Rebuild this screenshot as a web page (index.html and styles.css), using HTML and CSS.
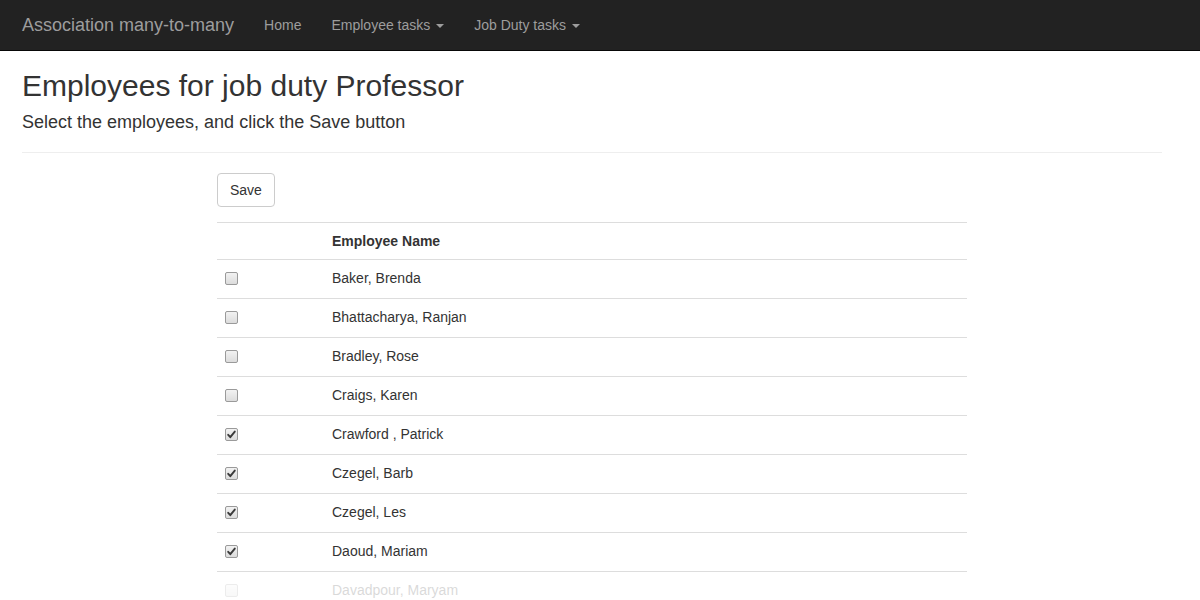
FILE: index.html
```html
<!DOCTYPE html>
<html>
<head>
<meta charset="utf-8">
<title>Employees for job duty Professor</title>
<link rel="stylesheet" href="styles.css">
</head>
<body>
<nav class="navbar">
  <a class="brand" href="#">Association many-to-many</a>
  <ul class="nav">
    <li><a href="#">Home</a></li>
    <li><a href="#">Employee tasks <span class="caret"></span></a></li>
    <li><a href="#">Job Duty tasks <span class="caret"></span></a></li>
  </ul>
</nav>
<div class="container">
  <h1 class="title">Employees for job duty Professor</h1>
  <h4 class="subtitle">Select the employees, and click the Save button</h4>
  <hr class="rule">
  <div class="row">
    <div class="col">
      <p class="actions"><button class="btn">Save</button></p>
      <table class="table">
        <thead>
          <tr><th class="c-check"></th><th>Employee Name</th></tr>
        </thead>
        <tbody>
          <tr><td class="c-check"><span class="cb"></span></td><td>Baker, Brenda</td></tr>
          <tr><td class="c-check"><span class="cb"></span></td><td>Bhattacharya, Ranjan</td></tr>
          <tr><td class="c-check"><span class="cb"></span></td><td>Bradley, Rose</td></tr>
          <tr><td class="c-check"><span class="cb"></span></td><td>Craigs, Karen</td></tr>
          <tr><td class="c-check"><span class="cb checked"><svg viewBox="0 0 13 13" width="13" height="13"><path d="M3.2 6.8 L5.3 9.2 L9.8 3.6" fill="none" stroke="#3a3a3a" stroke-width="1.9" stroke-linecap="round" stroke-linejoin="round"/></svg></span></td><td>Crawford , Patrick</td></tr>
          <tr><td class="c-check"><span class="cb checked"><svg viewBox="0 0 13 13" width="13" height="13"><path d="M3.2 6.8 L5.3 9.2 L9.8 3.6" fill="none" stroke="#3a3a3a" stroke-width="1.9" stroke-linecap="round" stroke-linejoin="round"/></svg></span></td><td>Czegel, Barb</td></tr>
          <tr><td class="c-check"><span class="cb checked"><svg viewBox="0 0 13 13" width="13" height="13"><path d="M3.2 6.8 L5.3 9.2 L9.8 3.6" fill="none" stroke="#3a3a3a" stroke-width="1.9" stroke-linecap="round" stroke-linejoin="round"/></svg></span></td><td>Czegel, Les</td></tr>
          <tr><td class="c-check"><span class="cb checked"><svg viewBox="0 0 13 13" width="13" height="13"><path d="M3.2 6.8 L5.3 9.2 L9.8 3.6" fill="none" stroke="#3a3a3a" stroke-width="1.9" stroke-linecap="round" stroke-linejoin="round"/></svg></span></td><td>Daoud, Mariam</td></tr>
          <tr class="faded"><td class="c-check"><span class="cb"></span></td><td>Davadpour, Maryam</td></tr>
        </tbody>
      </table>
    </div>
  </div>
</div>
</body>
</html>
```

FILE: styles.css
```css
* { box-sizing: border-box; }
html, body { margin: 0; padding: 0; }
body {
  font-family: "Liberation Sans", Arial, Helvetica, sans-serif;
  font-size: 14px;
  line-height: 20px;
  color: #333;
  background: #fff;
  overflow: hidden;
}
.navbar {
  display: flex;
  align-items: flex-start;
  height: 51px;
  background: #222;
  border-bottom: 1px solid #080808;
  padding: 0 7px;
}
.brand {
  display: block;
  padding: 15px 15px;
  font-size: 18px;
  line-height: 20px;
  color: #9d9d9d;
  text-decoration: none;
}
.nav {
  display: flex;
  list-style: none;
  margin: 0;
  padding: 0;
}
.nav a {
  display: block;
  padding: 15px 15px;
  line-height: 20px;
  color: #9d9d9d;
  text-decoration: none;
}
.caret {
  display: inline-block;
  width: 0;
  height: 0;
  margin-left: 2px;
  vertical-align: middle;
  border-top: 4px solid #9d9d9d;
  border-left: 4px solid transparent;
  border-right: 4px solid transparent;
}
.container {
  width: 1170px;
  margin-left: 7px;
  padding: 0 15px;
}
.title {
  font-size: 30px;
  font-weight: 500;
  line-height: 33px;
  margin: 18px 0 0;
  color: #333;
}
.subtitle {
  font-size: 18px;
  font-weight: 500;
  line-height: 20px;
  margin: 10px 0 0;
  color: #333;
}
.rule {
  border: 0;
  border-top: 1px solid #eee;
  margin: 20px 0 0;
}
.row {
  display: flex;
  margin: 0 -15px;
}
.col {
  width: 780px;
  margin-left: 195px;
  padding: 0 15px;
}
.actions {
  margin: 20px 0 15px;
}
.btn {
  font-family: inherit;
  font-size: 14px;
  line-height: 20px;
  height: 34px;
  padding: 6px 12px;
  color: #333;
  background: #fff;
  border: 1px solid #ccc;
  border-radius: 4px;
}
.table {
  width: 100%;
  border-collapse: collapse;
  border-spacing: 0;
}
.table th, .table td {
  text-align: left;
  padding: 8px;
  border-top: 1px solid #ddd;
  vertical-align: middle;
}
.table th {
  font-weight: bold;
  border-bottom: 1px solid #ddd;
  height: 35px;
}
.table td {
  height: 39px;
  padding: 7px 8px 9px;
}
.c-check { width: 107px; }
.cb {
  display: block;
  width: 13px;
  height: 13px;
  border: 1px solid #9a9a9a;
  border-radius: 2px;
  background: linear-gradient(#f2f2f2, #dcdcdc);
  position: relative;
}
.cb svg {
  position: absolute;
  left: -1px;
  top: -1px;
}
.faded { opacity: 0.18; }
```
